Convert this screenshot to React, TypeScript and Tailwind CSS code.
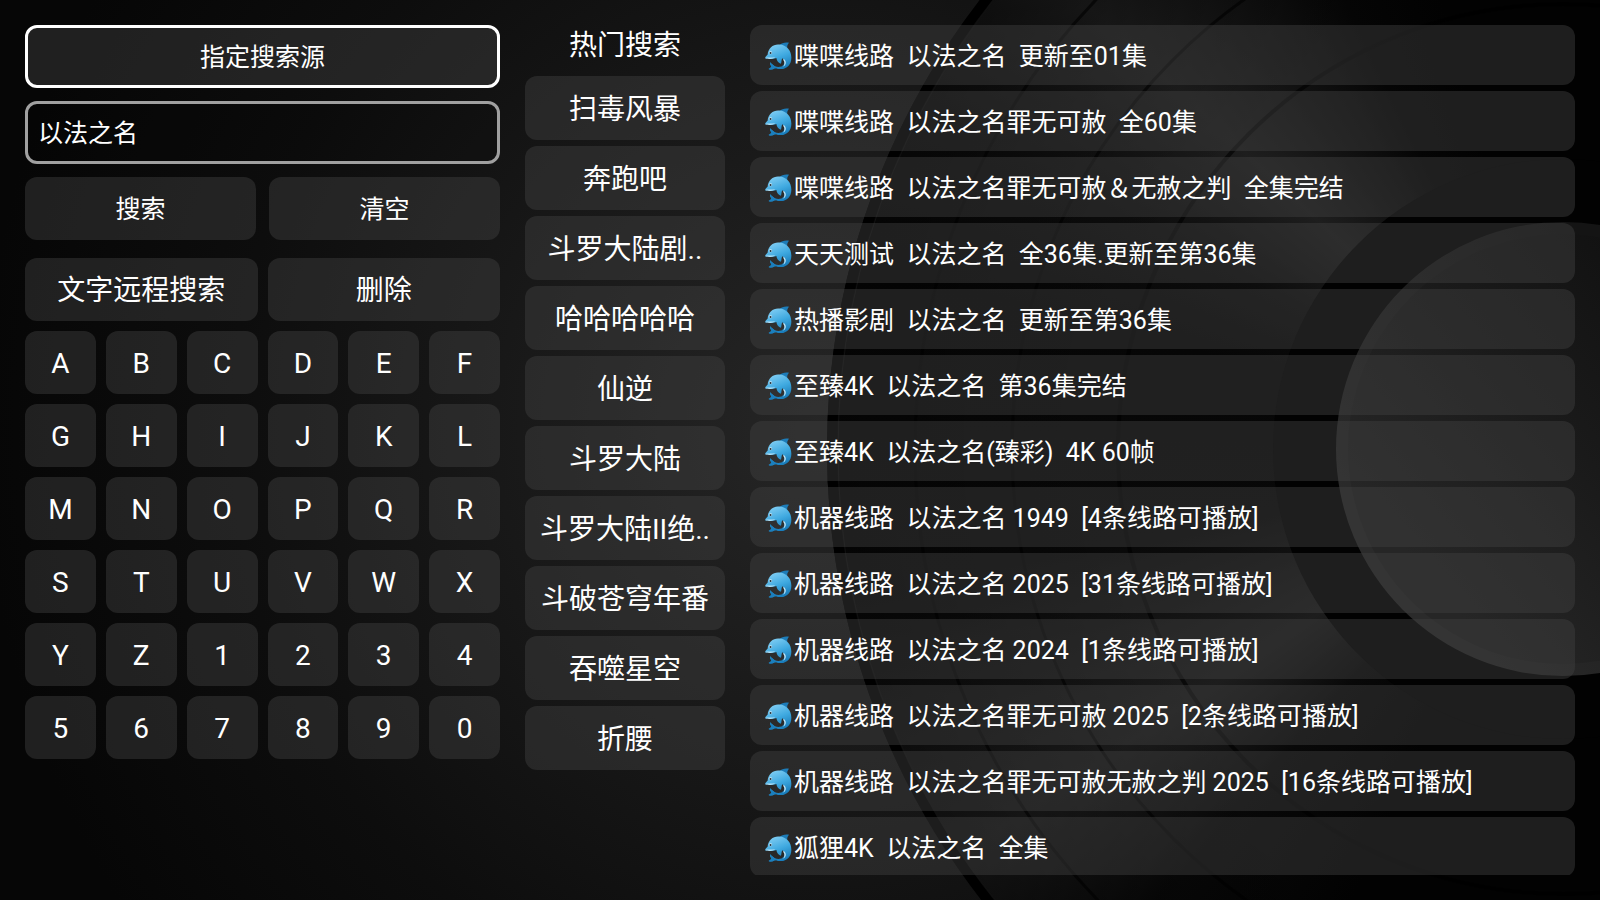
import React from 'react';

const keys = 'ABCDEFGHIJKLMNOPQRSTUVWXYZ1234567890'.split('');

const hotWords = [
    '扫毒风暴',
    '奔跑吧',
    '斗罗大陆剧..',
    '哈哈哈哈哈',
    '仙逆',
    '斗罗大陆',
    '斗罗大陆II绝..',
    '斗破苍穹年番',
    '吞噬星空',
    '折腰',
];

const results = [
    '喋喋线路  以法之名  更新至01集',
    '喋喋线路  以法之名罪无可赦  全60集',
    '喋喋线路  以法之名罪无可赦＆无赦之判  全集完结',
    '天天测试  以法之名  全36集.更新至第36集',
    '热播影剧  以法之名  更新至第36集',
    '至臻4K  以法之名  第36集完结',
    '至臻4K  以法之名(臻彩)  4K 60帧',
    '机器线路  以法之名 1949  [4条线路可播放]',
    '机器线路  以法之名 2025  [31条线路可播放]',
    '机器线路  以法之名 2024  [1条线路可播放]',
    '机器线路  以法之名罪无可赦 2025  [2条线路可播放]',
    '机器线路  以法之名罪无可赦无赦之判 2025  [16条线路可播放]',
    '狐狸4K  以法之名  全集',
];

const key63 = 'h-[63px] rounded-xl bg-[#404040]/45 pt-[2px]';

// Vinyl record wallpaper
function Wallpaper() {
    return (
        <div aria-hidden="true" className="absolute inset-0 overflow-hidden bg-[#040404] bg-[radial-gradient(ellipse_840px_860px_at_820px_430px,#262626_0%,#1b1b1b_30%,#0d0d0d_70%,#060606_100%)]">
            <div className="absolute -right-[699px] -top-[287px] size-[1472px] rounded-full bg-[conic-gradient(#020202_0deg,#020202_205deg,#080808_222deg,#1d1d1d_236deg,#181818_242deg,#080808_258deg,#060606_285deg,#0d0d0d_298deg,#1e1e1e_313deg,#181818_318deg,#050505_334deg,#020202_345deg,#020202_360deg)]">
                <svg viewBox="0 0 1472 1472" className="size-full">
                    <defs>
                        <linearGradient id="label" x1="0.1" y1="0.7" x2="0.8" y2="0.1">
                            <stop offset="0" stopColor="#262626" />
                            <stop offset="0.5" stopColor="#1a1a1a" />
                            <stop offset="1" stopColor="#101010" />
                        </linearGradient>
                        <linearGradient id="rim" x1="0" y1="0.6" x2="0.6" y2="0.1">
                            <stop offset="0" stopColor="#2b2b2b" />
                            <stop offset="1" stopColor="#141414" />
                        </linearGradient>
                        <radialGradient id="falloff">
                            <stop offset="0.6" stopColor="#000" stopOpacity="0" />
                            <stop offset="1" stopColor="#000" stopOpacity="0.4" />
                        </radialGradient>
                    </defs>
                    <circle cx="736" cy="736" r="736" fill="url(#falloff)" />
                    <g fill="none" stroke="#000">
                        <circle cx="736" cy="736" r="731" strokeWidth="10" />
                        <circle cx="736" cy="736" r="725" stroke="#111" strokeWidth="1" />
                        <circle cx="736" cy="736" r="648" strokeWidth="3" strokeOpacity="0.6" />
                        <circle cx="736" cy="736" r="551" strokeWidth="3" strokeOpacity="0.6" />
                        <circle cx="736" cy="736" r="445" strokeWidth="4" strokeOpacity="0.6" />
                    </g>
                    <circle cx="736" cy="736" r="290" fill="#020202" />
                    <circle cx="736" cy="736" r="227" fill="url(#rim)" />
                    <circle cx="736" cy="736" r="215" fill="url(#label)" />
                </svg>
            </div>
        </div>
    );
}

function Dolphin() {
    return (
        <svg viewBox="0 0 84 86" aria-hidden="true" className="mb-[2px] size-[28px] shrink-0">
            <defs>
                <linearGradient id="skin" x1="0.3" y1="0" x2="0.7" y2="1">
                    <stop offset="0" stopColor="#7fcdf3" />
                    <stop offset="0.5" stopColor="#3fa9e0" />
                    <stop offset="1" stopColor="#1577b5" />
                </linearGradient>
            </defs>
            <path d="M46 10C54 2 64 0 76 2C71 7 69 13 71 21Z" fill="#1d7cb8" />
            <path
                d="M2 50C3 45 7 42 10 39C12 18 28 6 46 8C68 9 83 26 83 48C83 70 68 85 46 83C40 82 36 79 32 81C26 85 19 86 13 83C17 81 20 78 22 75C19 71 17 67 18 62C22 67 28 71 33 75C42 78 55 77 60 69C64 61 62 54 55 50C52 56 53 62 51 67C44 64 38 58 37 49C27 52 16 54 10 51C7 50 5 52 2 50Z"
                fill="url(#skin)"
            />
            <path d="M13 83C19 86 26 85 32 81C36 79 40 82 46 83C52 84 58 82 64 79C55 82 42 80 33 75C28 71 22 67 18 62C17 67 19 71 22 75C20 78 17 81 13 83Z" fill="#1a7fbe" />
            <path d="M61 53C69 61 67 71 58 76C63 69 64 61 57 54Z" fill="#c5e9fa" />
            <path d="M4 48C12 47 22 48 34 47C27 52 16 53 10 51C7 50 5 51 4 48Z" fill="#b9e2f5" />
            <circle cx="19" cy="33" r="5" fill="#b9e2f5" />
            <circle cx="19" cy="34" r="3" fill="#22303a" />
        </svg>
    );
}

export default function App() {
    return (
        <main className="relative h-screen overflow-hidden bg-black text-white font-[Roboto,'Noto_Sans_CJK_SC',sans-serif]">
            <Wallpaper />
            <div className="relative flex h-full gap-[25px] p-[25px]">
                <section className="w-[475px] shrink-0">
                    <div className="grid grid-cols-2 gap-[13px] text-[25px]">
                        <button className={`col-span-2 border-3 border-white ${key63}`}>指定搜索源</button>
                        <input
                            aria-label="搜索"
                            defaultValue="以法之名"
                            className="col-span-2 h-[63px] rounded-xl border-3 border-[#a0a0a0] bg-black/10 px-[10px] pb-1 outline-none"
                        />
                        <button className={key63}>搜索</button>
                        <button className={key63}>清空</button>
                    </div>
                    <div className="mt-[18px] grid grid-cols-2 gap-[10px] text-[28px]">
                        <button className={key63}>文字远程搜索</button>
                        <button className={key63}>删除</button>
                    </div>
                    <div className="mt-[10px] grid grid-cols-6 gap-[10px] text-[28px]">
                        {keys.map((key) => (
                            <button key={key} className={key63}>{key}</button>
                        ))}
                    </div>
                </section>

                <section className="w-[200px] shrink-0 text-[28px]">
                    <h2 className="h-[51px] text-center leading-[42px]">热门搜索</h2>
                    <div className="flex flex-col gap-[6px]">
                        {hotWords.map((word) => (
                            <button key={word} className="h-[64px] whitespace-nowrap rounded-xl bg-[#404040]/45 pt-1">{word}</button>
                        ))}
                    </div>
                </section>

                <section className="flex min-w-0 flex-1 flex-col gap-[6px] overflow-hidden text-[25px]">
                    {results.map((item) => (
                        <button key={item} className="flex h-[60px] shrink-0 items-center gap-[2px] whitespace-pre rounded-xl bg-[#404040]/45 px-[14px] pt-1 text-left">
                            <Dolphin />
                            {item}
                        </button>
                    ))}
                </section>
            </div>
        </main>
    );
}
